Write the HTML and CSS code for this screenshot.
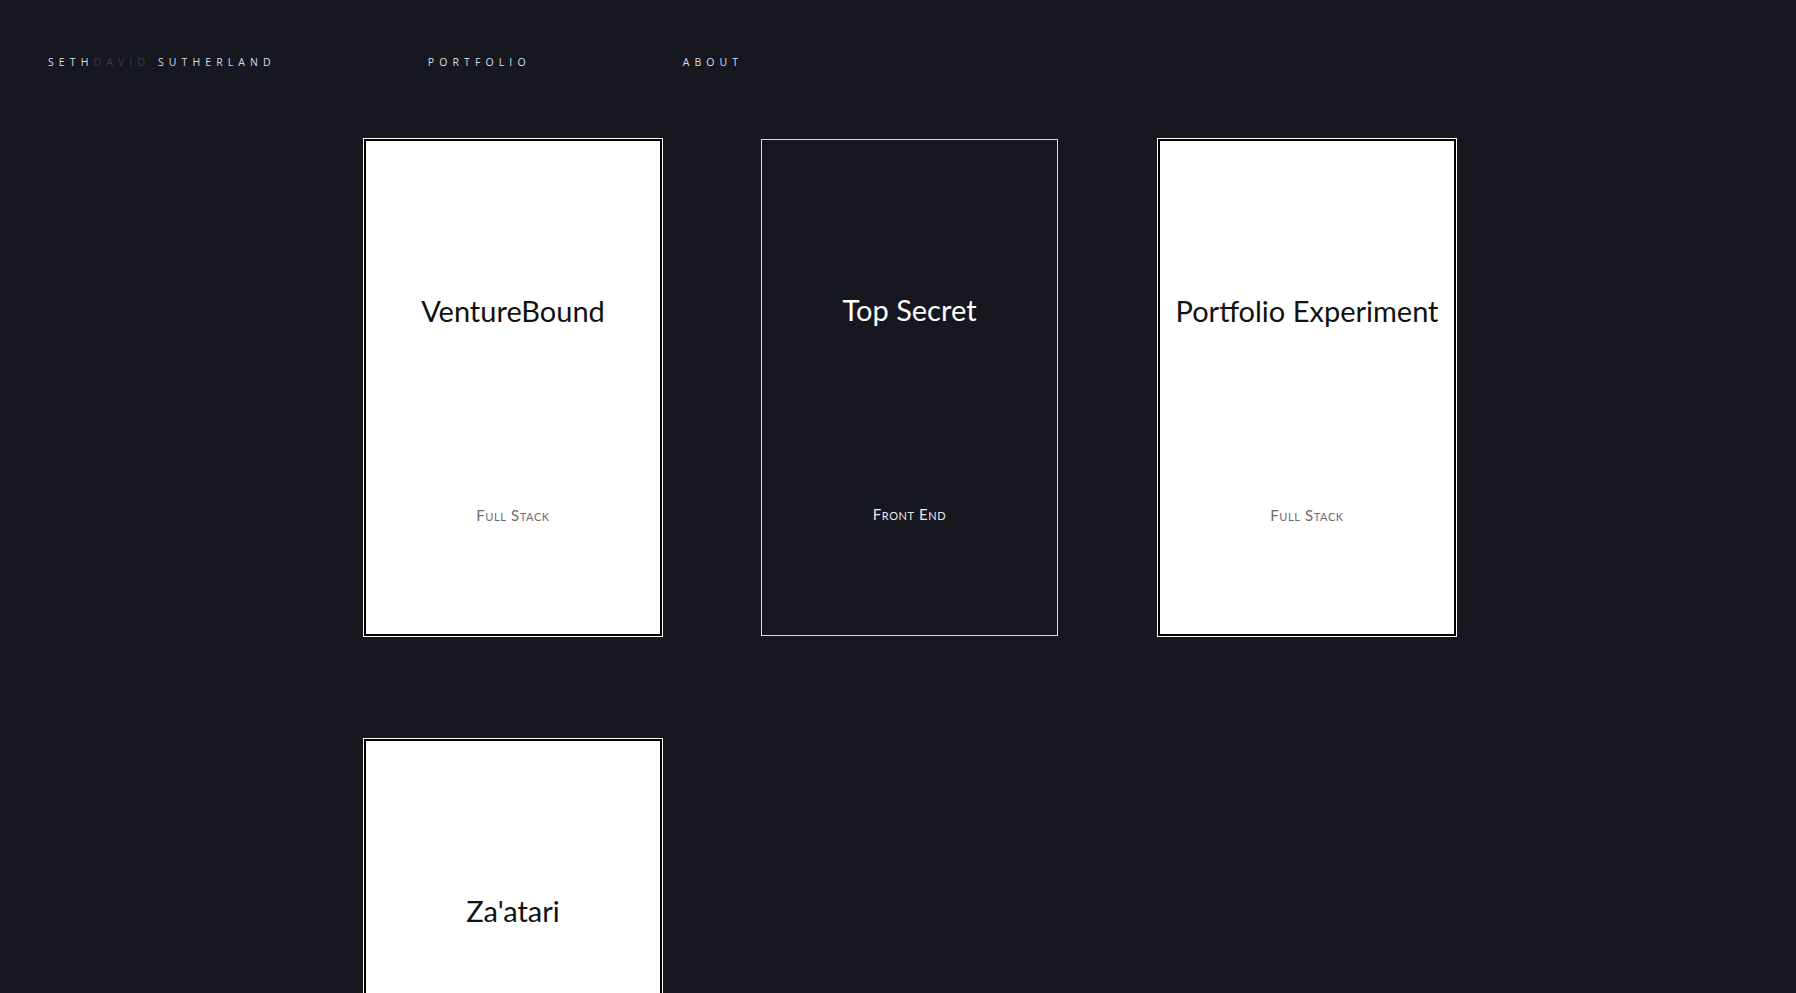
FILE: index.html
```html
<!DOCTYPE html>
<html lang="en">
<head>
<meta charset="utf-8">
<title>Seth David Sutherland — Portfolio</title>
<link rel="stylesheet" href="styles.css">
</head>
<body>
<header class="site-header">
  <a class="logo" href="#"><span class="first">Seth</span><span class="middle">David</span> <span class="last">Sutherland</span></a>
  <a class="nav-link" href="#">Portfolio</a>
  <a class="nav-link" href="#">About</a>
</header>
<main class="projects">
  <div class="card card-light">
    <h2 class="card-title">VentureBound</h2>
    <p class="card-tag">Full Stack</p>
  </div>
  <div class="card card-dark">
    <h2 class="card-title">Top Secret</h2>
    <p class="card-tag">Front End</p>
  </div>
  <div class="card card-light">
    <h2 class="card-title">Portfolio Experiment</h2>
    <p class="card-tag">Full Stack</p>
  </div>
  <div class="card card-light">
    <h2 class="card-title">Za'atari</h2>
    <p class="card-tag">Full Stack</p>
  </div>
</main>
</body>
</html>
```
FILE: styles.css
```css
* { box-sizing: border-box; }
html, body { margin: 0; padding: 0; }
body {
  background: #16171f;
  font-family: "Open Sans", "Liberation Sans", sans-serif;
  color: #d8dde8;
}
.site-header {
  display: flex;
  align-items: center;
  gap: 152px;
  padding: 55px 0 0 48px;
  height: 69px;
}
.site-header a {
  text-decoration: none;
  text-transform: uppercase;
  font-size: 10.5px;
  line-height: 14px;
  letter-spacing: 5.1px;
  color: #d6dce8;
}
.logo .middle { color: #3a3d49; }
.projects {
  display: grid;
  grid-template-columns: repeat(3, 298px);
  column-gap: 99px;
  row-gap: 103px;
  padding: 70px 0 0 364px;
}
.card {
  height: 497px;
  display: flex;
  flex-direction: column;
  align-items: center;
  text-align: center;
}
.card-light {
  background: #fff;
  border: 2px solid #000;
  box-shadow: 0 0 0 1px #fff;
  color: #111;
}
.card-dark {
  background: #16171f;
  border: 1px solid #d9d9d9;
  color: #fff;
  width: 297px;
}
.card-title {
  margin: 151px 0 0;
  font-family: Lato, "Noto Sans", sans-serif;
  font-weight: 400;
  font-size: 29px;
  line-height: 37px;
  white-space: nowrap;
}
.card-tag {
  margin: 177px 0 0;
  font-family: Lato, "Noto Sans", sans-serif;
  font-variant: small-caps;
  font-size: 15px;
  line-height: 18px;
  letter-spacing: 0.6px;
  color: #6b6b73;
}
.card-dark .card-tag { color: #e8e8f0; }
```
